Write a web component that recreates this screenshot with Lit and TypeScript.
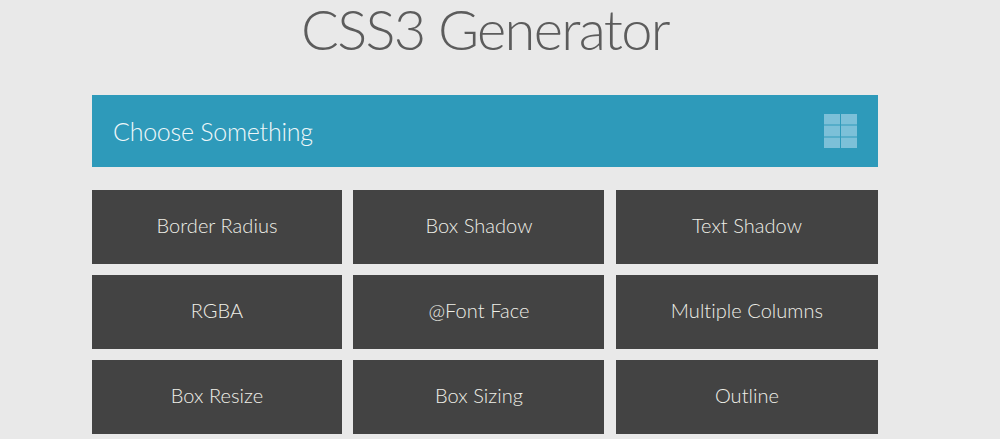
import { LitElement, html, css } from "lit";
import { customElement } from "lit/decorators.js";

const ITEMS = [
  "Border Radius", "Box Shadow", "Text Shadow",
  "RGBA", "@Font Face", "Multiple Columns",
  "Box Resize", "Box Sizing", "Outline",
];

@customElement("app-root")
export class AppRoot extends LitElement {
  static styles = css`
    :host {
      display: block;
      width: 1000px;
      height: 439px;
      overflow: hidden;
      background: #e9e9e9;
      font-family: "Lato", "Open Sans", sans-serif;
      font-weight: 300;
    }
    .title {
      margin: 0;
      padding-left: 301px;
      height: 95px;
      box-sizing: border-box;
      font-size: 56px;
      line-height: 58px;
      font-weight: 300;
      letter-spacing: -1.7px;
      color: #5c5c5c;
      white-space: nowrap;
    }
    .main {
      width: 786px;
      margin-left: 92px;
    }
    .bar {
      height: 72px;
      background: #2e9aba;
      display: flex;
      align-items: center;
      justify-content: space-between;
      padding: 0 21px;
      color: #eef7f9;
      font-size: 25px;
      letter-spacing: -0.25px;
    }
    .bar svg { display: block; }
    .grid {
      margin-top: 23px;
      display: grid;
      grid-template-columns: 250px 251px 262px;
      grid-auto-rows: 74px;
      column-gap: 11.49px;
      row-gap: 11px;
    }
    .tile {
      background: #434343;
      color: #efefe8;
      display: flex;
      align-items: center;
      justify-content: center;
      font-size: 20px;
      letter-spacing: 0.05px;
      padding-bottom: 4px;
      box-sizing: border-box;
    }
  `;

  render() {
    return html`
      <h1 class="title">CSS3 Generator</h1>
      <div class="main">
        <div class="bar">
          <span>Choose Something</span>
          <svg width="33" height="34" viewBox="0 0 33 34" fill="#7cc0d8">
            <rect x="0" y="0" width="16" height="10.5" />
            <rect x="17" y="0" width="16" height="10.5" />
            <rect x="0" y="11.5" width="16" height="11" />
            <rect x="17" y="11.5" width="16" height="11" />
            <rect x="0" y="23.5" width="16" height="10.5" />
            <rect x="17" y="23.5" width="16" height="10.5" />
          </svg>
        </div>
        <div class="grid">
          ${ITEMS.map((t) => html`<div class="tile">${t}</div>`)}
        </div>
      </div>
    `;
  }
}
